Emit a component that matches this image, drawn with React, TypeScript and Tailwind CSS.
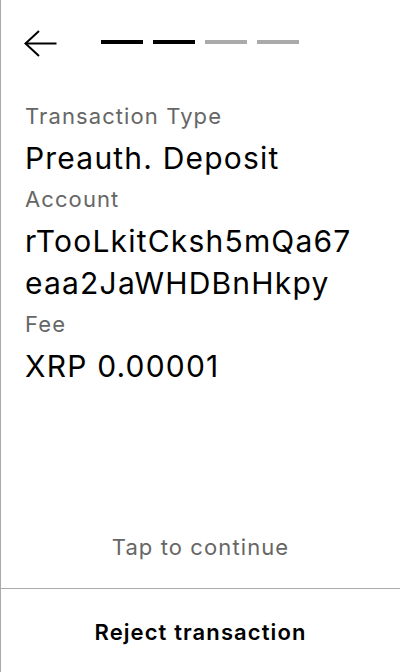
const steps = [true, true, false, false]

function BackArrow() {
	return (
		<svg width="33" height="28" viewBox="0 0 33 28" fill="none" stroke="#000" strokeWidth="2">
			<path d="M1.5 13.5H32.5" />
			<path d="M15 1L1.5 13.5L15 26" />
		</svg>
	)
}

function Field({ label, value }: { label: string; value: string }) {
	return (
		<div>
			<div className="text-[22px] leading-[41px] tracking-[0.05em] text-[#666]">{label}</div>
			<div className="text-[30px] leading-[42px] tracking-[0.04em] text-black break-all">{value}</div>
		</div>
	)
}

export default function App() {
	return (
		<div
			className="flex flex-col h-[672px] w-[400px] bg-white border-l border-[#aaa]"
			style={{ fontFamily: 'Inter, "Noto Sans", sans-serif' }}
		>
			<div className="flex items-start pl-[23px] pt-[30px]">
				<BackArrow />
				<div className="flex gap-[10px] ml-[44px] mt-[10px]">
					{steps.map((done, i) => (
						<div
							key={i}
							className={done ? 'h-[4px] w-[42px] bg-black' : 'h-[4px] w-[42px] bg-[#aaa]'}
						></div>
					))}
				</div>
			</div>

			<div className="flex flex-col pl-[24px] pr-[40px] mt-[38px]">
				<Field label="Transaction Type" value="Preauth. Deposit" />
				<Field label="Account" value="rTooLkitCksh5mQa67eaa2JaWHDBnHkpy" />
				<Field label="Fee" value="XRP 0.00001" />
			</div>

			<div className="flex-1"></div>

			<div className="text-center text-[22px] tracking-[0.05em] text-[#666] pb-[24px]">Tap to continue</div>
			<div className="border-t border-[#aaa] h-[84px] flex items-center justify-center pt-[4px]">
				<span className="text-[22px] tracking-[0.05em] font-semibold text-black">Reject transaction</span>
			</div>
		</div>
	)
}
